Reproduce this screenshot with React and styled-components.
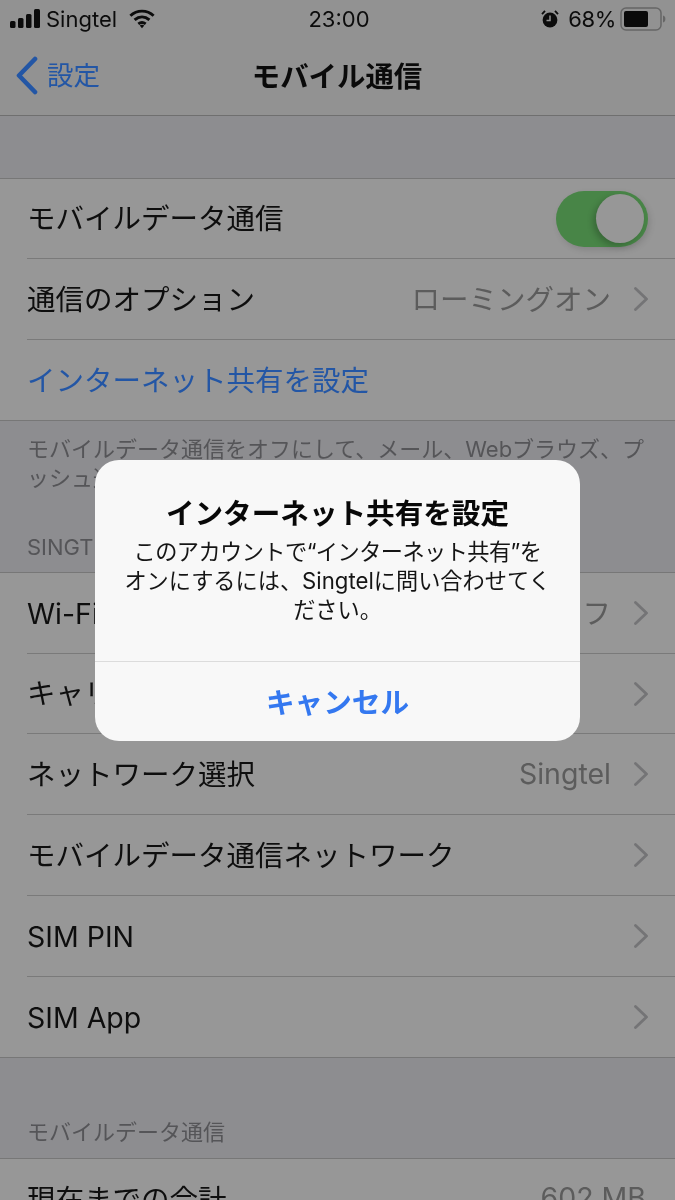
import React from 'react';
import styled, { createGlobalStyle } from 'styled-components';

const Global = createGlobalStyle`
  html, body { margin: 0; padding: 0; background: #8d8d90; }
  * { box-sizing: border-box; }
`;
const FONT = `"Inter", "Noto Sans CJK JP", "Noto Sans", sans-serif`;

const Screen = styled.div`
  position: relative; width: 675px; height: 1200px; overflow: hidden;
  background: #8d8d90; font-family: ${FONT}; color: #0a0a0a; filter: blur(0.4px);
`;
const Status = styled.div`
  height: 40px; background: #929292; display: grid; grid-template-columns: 1fr auto 1fr;
  align-items: center; padding: 0 9px 2px 10px; font-size: 22px; color: #0c0c0c;
`;
const StatusSide = styled.div`
  display: flex; align-items: center; gap: ${p => p.$gap || 7}px;
  justify-content: ${p => p.$end ? 'flex-end' : 'flex-start'};
`;
const Carrier = styled.span`margin-left: -3px; margin-right: 5px;`;
const Clock = styled.div`margin-left: 2px;`;
const Percent = styled.span`margin-left: 6px; margin-right: 1px; letter-spacing: -0.4px;`;
const Nav = styled.div`
  height: 76px; background: #929292; border-bottom: 1px solid #6f6f6f; position: relative;
  display: flex; align-items: center; justify-content: center; padding-bottom: 7px;
`;
const NavTitle = styled.div`font-size: 28.4px; font-weight: 700; margin-right: 1px;`;
const Back = styled.div`
  position: absolute; left: 15px; top: 10px; display: flex; align-items: center; gap: 8px;
  color: #2356a5; font-size: 26.5px;
  svg { margin-top: 6px; }
`;
const Spacer = styled.div`height: ${p => p.$h}px;`;
const Group = styled.div`
  background: #979797; border-top: 1px solid #777; border-bottom: ${p => p.$open ? 0 : '1px solid #777'};
`;
const Row = styled.div`
  height: ${p => p.$h || 81}px; margin-left: 27px; padding-right: 26px; display: flex;
  align-items: center; justify-content: space-between;
  border-bottom: ${p => p.$last ? 0 : '1px solid #7a7a7a'};
  font-size: 28.5px; color: ${p => p.$blue ? '#2356a5' : '#0e0e0e'};
`;
const Label = styled.span`margin-bottom: ${p => p.$latin ? 0 : 4}px;`;
const Detail = styled.div`
  display: flex; align-items: center; gap: 22px; color: #5c5c5c; font-size: 28.5px;
  margin-right: ${p => p.$inset || 0}px;
`;
const DetailText = styled.span`margin-bottom: ${p => p.$latin ? 1 : 3}px;`;
const Note = styled.div`
  height: 125px; padding: 14px 20px 0 27px; font-size: 22px; line-height: 29px; color: #555558; white-space: nowrap;
`;
const Header = styled.div`
  height: ${p => p.$h}px; padding: 0 27px 12px; font-size: 22px; color: #555558;
  display: flex; align-items: flex-end;
`;
const Switch = styled.div`
  width: 92px; height: 56px; border-radius: 28px; background: #488547; position: relative;
  margin-right: 1px; box-shadow: 2px 3px 6px rgba(0,0,0,.12);
`;
const Knob = styled.div`
  position: absolute; right: 4px; top: 3px; width: 48px; height: 49px; border-radius: 50%;
  background: #979797; box-shadow: -3px 3px 6px rgba(0,0,0,.22);
`;
const Alert = styled.div`
  position: absolute; left: 95px; top: 460px; width: 485px; height: 281px; border-radius: 24px;
  background: #f8f8f8; display: flex; flex-direction: column; text-align: center;
`;
const AlertBody = styled.div`height: 202px; padding-top: 36px; border-bottom: 1px solid #dcdcdc;`;
const AlertTitle = styled.div`font-size: 28.6px; font-weight: 700; line-height: 36px; color: #080808;`;
const AlertText = styled.div`
  font-size: 22.2px; line-height: 29px; color: #151515; margin-top: 5px; white-space: nowrap;
`;
const TightLine = styled.span`letter-spacing: -0.55px;`;
const AlertButton = styled.div`
  flex: 1; display: flex; align-items: center; justify-content: center; font-size: 28.6px;
  font-weight: 700; color: #3478f0; padding-bottom: 2px;
`;

const Chevron = () => (
  <svg width="16" height="24" viewBox="0 0 16 24" fill="none" stroke="#747476" strokeWidth="2.8" strokeLinecap="round" strokeLinejoin="round">
    <path d="M2.5 1.5L13.5 12 2.5 22.5" />
  </svg>
);
const BackChevron = () => (
  <svg width="24" height="40" viewBox="0 0 24 40" fill="none" stroke="#2356a5" strokeWidth="4.6" strokeLinecap="round" strokeLinejoin="round">
    <path d="M20 3L4 19.5 20 36" />
  </svg>
);
const Signal = () => (
  <svg width="32" height="20" viewBox="0 0 32 20" fill="#0c0c0c">
    <rect x="0" y="12" width="5.5" height="7" rx="1.5" /><rect x="8" y="9" width="5.5" height="10" rx="1.5" />
    <rect x="16" y="5" width="5.5" height="14" rx="1.5" /><rect x="24" y="0" width="6" height="19" rx="1.5" />
  </svg>
);
const Wifi = () => (
  <svg width="26" height="22" viewBox="0 0 28 22" fill="none" stroke="#0c0c0c" strokeWidth="3.1">
    <path d="M1.5 7.5C8.5 .8 19.5 .8 26.5 7.5" /><path d="M6 12c5-4.4 11-4.4 16 0" /><path d="M10 16.2c2.5-1.8 5.5-1.8 8 0" />
    <path d="M11.5 18L14 21l2.5-3c-1.5-1-3.5-1-5 0z" fill="#0c0c0c" stroke="none" />
  </svg>
);
const Alarm = () => (
  <svg width="18" height="20" viewBox="0 0 18 20">
    <circle cx="9" cy="11" r="7.4" fill="#0c0c0c" />
    <path d="M9 6.5V11.5H5.5" stroke="#929292" strokeWidth="1.5" fill="none" />
    <path d="M1 5.2L4 1.8M17 5.2L14 1.8" stroke="#0c0c0c" strokeWidth="1.8" />
  </svg>
);
const Battery = () => (
  <svg width="46" height="24" viewBox="0 0 46 24">
    <rect x="1" y="1" width="40" height="22" rx="5" fill="none" stroke="#666" strokeWidth="1.5" />
    <rect x="4" y="4" width="24" height="16" rx="2" fill="#0a0a0a" />
    <path d="M43 8.5c1.6.5 2.4 1.8 2.4 3.5s-.8 3-2.4 3.5z" fill="#666" />
  </svg>
);

export default function App() {
  return (
    <Screen>
      <Global />
      <Status>
        <StatusSide>
          <Signal />
          <Carrier>Singtel</Carrier>
          <Wifi />
        </StatusSide>
        <Clock>23:00</Clock>
        <StatusSide $end $gap={3}>
          <Alarm />
          <Percent>68%</Percent>
          <Battery />
        </StatusSide>
      </Status>
      <Nav>
        <Back><BackChevron /><span>設定</span></Back>
        <NavTitle>モバイル通信</NavTitle>
      </Nav>
      <Spacer $h={62} />
      <Group>
        <Row $h={80}><Label>モバイルデータ通信</Label><Switch><Knob /></Switch></Row>
        <Row><Label>通信のオプション</Label><Detail><DetailText>ローミングオン</DetailText><Chevron /></Detail></Row>
        <Row $blue $last $h={80}><Label>インターネット共有を設定</Label></Row>
      </Group>
      <Note>モバイルデータ通信をオフにして、メール、Webブラウズ、プ<br />ッシュ通知を含むすべてのデータをWi-Fiに制限します。</Note>
      <Header $h={26}>SINGTEL</Header>
      <Group>
        <Row><Label>Wi-Fi通話</Label><Detail><DetailText>オフ</DetailText><Chevron /></Detail></Row>
        <Row $h={80}><Label>キャリア</Label><Chevron /></Row>
        <Row><Label>ネットワーク選択</Label><Detail><DetailText $latin>Singtel</DetailText><Chevron /></Detail></Row>
        <Row><Label>モバイルデータ通信ネットワーク</Label><Chevron /></Row>
        <Row><Label $latin>SIM PIN</Label><Chevron /></Row>
        <Row $last $h={80}><Label $latin>SIM App</Label><Chevron /></Row>
      </Group>
      <Header $h={100}>モバイルデータ通信</Header>
      <Group $open>
        <Row><Label>現在までの合計</Label><Detail $inset={3}><DetailText>602 MB</DetailText></Detail></Row>
      </Group>
      <Alert>
        <AlertBody>
          <AlertTitle>インターネット共有を設定</AlertTitle>
          <AlertText><TightLine>このアカウントで“インターネット共有”を</TightLine><br />オンにするには、Singtelに問い合わせてく<br />ださい。</AlertText>
        </AlertBody>
        <AlertButton>キャンセル</AlertButton>
      </Alert>
    </Screen>
  );
}
